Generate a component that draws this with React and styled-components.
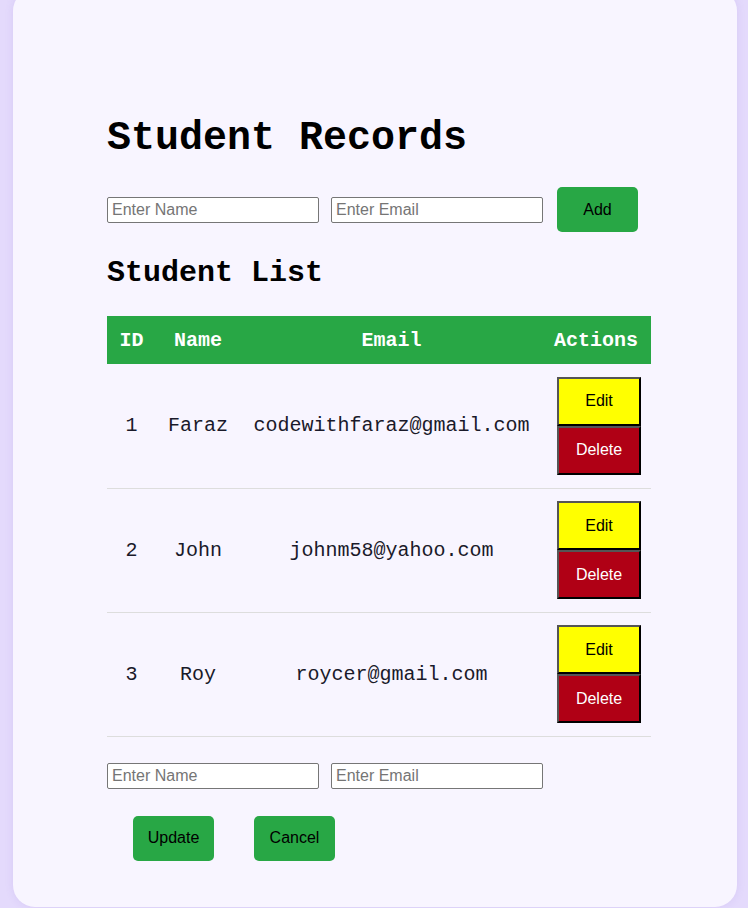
import React, { useState } from 'react';
import styled, { createGlobalStyle } from 'styled-components';

const GlobalStyle = createGlobalStyle`
  html, body {
    margin: 0;
    padding: 0;
    background-color: #e4dafc;
  }
  * {
    box-sizing: border-box;
  }
`;

const Page = styled.div`
  min-height: 908px;
  padding: 0 11px 0 13px;
  overflow: hidden;
`;

const Card = styled.div`
  margin-top: -11px;
  height: 918px;
  background-color: #f8f5ff;
  border-radius: 22px;
  box-shadow: 0 0 8px rgba(120, 90, 200, 0.12);
  padding: 127px 86px 0 94px;
  font-family: "Liberation Mono", "Courier New", monospace;
`;

const Title = styled.h1`
  margin: 0;
  font-size: 40px;
  line-height: 46px;
  font-weight: bold;
  color: #000;
`;

const SubTitle = styled.h2`
  margin: 24px 0 0;
  font-size: 30px;
  line-height: 34px;
  font-weight: bold;
  color: #000;
`;

const FormRow = styled.div`
  display: flex;
  align-items: center;
  margin: ${p => p.$margin};
`;

const TextInput = styled.input`
  width: 212px;
  height: 26px;
  margin-right: ${p => p.$gap || '12px'};
  padding: 1px 4px;
  border: 1px solid #767676;
  border-radius: 2px;
  background: #fff;
  font-family: "Liberation Sans", Arial, sans-serif;
  font-size: 16px;
  color: #000;
  &::placeholder {
    color: #757575;
  }
`;

const GreenButton = styled.button`
  width: 81px;
  height: 45px;
  border: none;
  border-radius: 5px;
  background-color: #28a745;
  color: #000;
  font-family: "Liberation Sans", Arial, sans-serif;
  font-size: 16px;
  cursor: pointer;
`;

const ButtonRow = styled.div`
  display: flex;
  gap: 40px;
  padding-left: 26px;
  margin-top: 27px;
`;

const Table = styled.table`
  width: 544px;
  border-collapse: collapse;
  table-layout: fixed;
  margin-top: 26px;
`;

const HeadCell = styled.th`
  width: ${p => p.$w};
  height: 48px;
  padding: 0;
  background-color: #28a745;
  color: #fff;
  font-size: 20px;
  font-weight: bold;
  text-align: ${p => p.$align || 'center'};
  padding-right: ${p => p.$pr || '0'};
`;

const Cell = styled.td`
  height: 124px;
  padding: 0;
  border-bottom: 1px solid #dddddd;
  font-size: 20px;
  color: #1a1a2a;
  text-align: center;
  vertical-align: middle;
`;

const ActionStack = styled.div`
  display: flex;
  flex-direction: column;
  align-items: flex-start;
  padding-left: 14px;
`;

const RowButton = styled.button`
  width: 84px;
  height: 49px;
  padding: 0;
  border: 2px solid;
  border-color: #555 #000 #000 #555;
  background-color: ${p => (p.$danger ? '#b00015' : '#ffff00')};
  color: ${p => (p.$danger ? '#fff' : '#000')};
  font-family: "Liberation Sans", Arial, sans-serif;
  font-size: 16px;
  cursor: pointer;
`;

const initialStudents = [
  { id: 1, name: 'Faraz', email: 'codewithfaraz@gmail.com' },
  { id: 2, name: 'John', email: 'johnm58@yahoo.com' },
  { id: 3, name: 'Roy', email: 'roycer@gmail.com' },
];

const App = () => {
  const [students] = useState(initialStudents);

  return (
    <Page>
      <GlobalStyle />
      <Card>
        <Title>Student Records</Title>

        <FormRow $margin="25px 0 0 0">
          <TextInput type="text" placeholder="Enter Name" />
          <TextInput type="email" placeholder="Enter Email" $gap="14px" />
          <GreenButton>Add</GreenButton>
        </FormRow>

        <SubTitle>Student List</SubTitle>

        <Table>
          <thead>
            <tr>
              <HeadCell $w="49px">ID</HeadCell>
              <HeadCell $w="84px">Name</HeadCell>
              <HeadCell $w="303px">Email</HeadCell>
              <HeadCell $w="108px" $align="right" $pr="13px">Actions</HeadCell>
            </tr>
          </thead>
          <tbody>
            {students.map(s => (
              <tr key={s.id}>
                <Cell>{s.id}</Cell>
                <Cell>{s.name}</Cell>
                <Cell>{s.email}</Cell>
                <Cell>
                  <ActionStack>
                    <RowButton>Edit</RowButton>
                    <RowButton $danger>Delete</RowButton>
                  </ActionStack>
                </Cell>
              </tr>
            ))}
          </tbody>
        </Table>

        <FormRow $margin="26px 0 0 0">
          <TextInput type="text" placeholder="Enter Name" />
          <TextInput type="email" placeholder="Enter Email" />
        </FormRow>

        <ButtonRow>
          <GreenButton>Update</GreenButton>
          <GreenButton>Cancel</GreenButton>
        </ButtonRow>
      </Card>
    </Page>
  );
};

export default App;
